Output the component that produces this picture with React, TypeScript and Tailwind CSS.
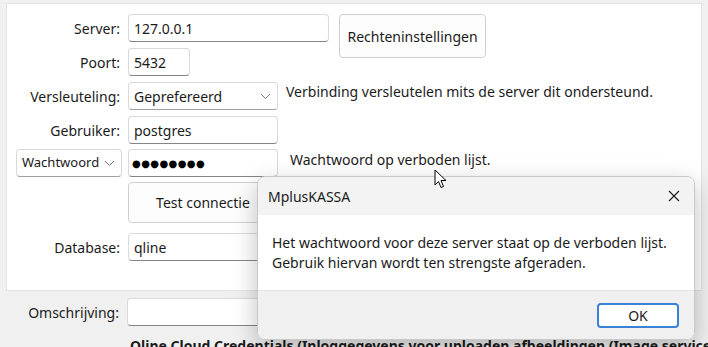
import React from "react";

const font = { fontFamily: '"Noto Sans", "Open Sans", sans-serif' };

function TextBox({ value, className = "", children }: { value?: string; className?: string; children?: React.ReactNode }) {
  return (
    <div
      className={`h-[28px] bg-white border border-[#d9d9d9] border-b-[#868686] rounded-[4px] px-[5px] flex items-center text-[14px] text-[#1b1b1b] ${className}`}
    >
      {value}
      {children}
    </div>
  );
}

function Combo({ value, className = "", small = false }: { value: string; className?: string; small?: boolean }) {
  return (
    <div
      className={`h-[28px] bg-white border border-[#d9d9d9] border-b-[#a0a0a0] rounded-[4px] pl-[5px] pr-[6px] flex items-center justify-between text-[#1b1b1b] ${small ? "text-[13px]" : "text-[14px]"} ${className}`}
    >
      <span className="whitespace-nowrap">{value}</span>
      <svg width="11" height="7" viewBox="0 0 11 7" className="text-[#777] shrink-0">
        <path d="M1 1 L5.5 5.5 L10 1" fill="none" stroke="currentColor" strokeWidth="1" />
      </svg>
    </div>
  );
}

function Label({ text }: { text: string }) {
  return <div className="w-[106px] pr-[2px] text-right text-[14px] text-[#1b1b1b] whitespace-nowrap">{text}</div>;
}

export default function App() {
  return (
    <div className="relative w-[708px] h-[347px] overflow-hidden bg-[#f0f0f0]" style={font}>
      {/* group panel */}
      <div className="ml-[6px] mt-[3px] w-[696px] h-[288px] bg-white border border-[#e3e3e3] pt-[10px] pl-[9px]">
        <div className="flex items-start">
          <div className="flex flex-col gap-[6px]">
            <div className="flex items-center gap-[6px]">
              <Label text="Server:" />
              <TextBox value="127.0.0.1" className="w-[201px]" />
            </div>
            <div className="flex items-center gap-[6px]">
              <Label text="Poort:" />
              <TextBox value="5432" className="w-[62px]" />
            </div>
          </div>
          <button className="ml-[10px] w-[147px] h-[44px] bg-[#fdfdfd] border border-[#d0d0d0] rounded-[4px] text-[14px] text-[#1b1b1b]">
            Rechteninstellingen
          </button>
        </div>

        <div className="flex items-center gap-[6px] mt-[6px]">
          <Label text="Versleuteling:" />
          <Combo value="Geprefereerd" className="w-[150px]" />
          <span className="ml-[2px] -mt-[10px] text-[14px] text-[#1b1b1b] whitespace-nowrap">
            Verbinding versleutelen mits de server dit ondersteund.
          </span>
        </div>

        <div className="flex items-center gap-[6px] mt-[6px]">
          <Label text="Gebruiker:" />
          <TextBox value="postgres" className="w-[150px]" />
        </div>

        <div className="flex items-center gap-[6px] mt-[5px]">
          <Combo value="Wachtwoord" small className="w-[106px]" />
          <TextBox className="w-[150px]">
            <span
              className="-ml-[2px] text-[10px] tracking-[0.4px] text-black"
              style={{ fontFamily: '"DejaVu Sans", sans-serif' }}
            >
              ●●●●●●●●
            </span>
          </TextBox>
          <span className="ml-[6px] -mt-[8px] text-[14px] text-[#1b1b1b] whitespace-nowrap">Wachtwoord op verboden lijst.</span>
        </div>

        <button className="ml-[112px] mt-[5px] w-[150px] h-[41px] bg-[#fdfdfd] border border-[#d0d0d0] rounded-[4px] text-[14px] text-[#1b1b1b]">
          Test connectie
        </button>

        <div className="flex items-center gap-[6px] mt-[10px]">
          <Label text="Database:" />
          <TextBox value="qline" className="w-[300px]" />
        </div>
      </div>

      <div className="flex items-center gap-[6px] mt-[7px] pl-[15px]">
        <Label text="Omschrijving:" />
        <TextBox className="w-[460px] h-[25px]" />
      </div>

      <div className="pl-[130px] mt-[9px] text-[14px] font-bold text-[#1b1b1b] whitespace-nowrap">
        Qline Cloud Credentials (Inloggegevens voor uploaden afbeeldingen (Image service))
      </div>

      {/* dialog overlay */}
      <div className="absolute left-[257px] top-[176px] w-[438px] h-[164px] rounded-[8px] border border-[#c9c9c9] overflow-hidden shadow-[0_8px_24px_rgba(0,0,0,0.25)] flex flex-col">
        <div className="h-[38px] bg-[#f3f3f3] flex items-center justify-between pl-[10px] pr-[14px] text-[14px] text-[#1b1b1b]">
          <span>MplusKASSA</span>
          <svg width="12" height="12" viewBox="0 0 12 12">
            <path d="M1 1 L11 11 M11 1 L1 11" stroke="#1b1b1b" strokeWidth="1.1" />
          </svg>
        </div>
        <div className="h-[75px] bg-white pl-[14px] pt-[18px] text-[14px] leading-[20px] text-[#1b1b1b]">
          <div>Het wachtwoord voor deze server staat op de verboden lijst.</div>
          <div>Gebruik hiervan wordt ten strengste afgeraden.</div>
        </div>
        <div className="flex-1 bg-[#f0f0f0] border-t border-[#e5e5e5] flex items-start justify-end pt-[12px] pr-[15px]">
          <button className="w-[82px] h-[25px] bg-white border-2 border-[#3b82d6] rounded-[4px] text-[14px] text-[#1b1b1b]">
            OK
          </button>
        </div>
      </div>

      {/* mouse cursor */}
      <svg className="absolute left-[434px] top-[169px]" width="13" height="20" viewBox="0 0 13 20">
        <path d="M1 1 L1 16 L4.5 12.5 L7 18.5 L9.5 17.5 L7 11.5 L12 11.5 Z" fill="white" stroke="black" strokeWidth="1" />
      </svg>
    </div>
  );
}
